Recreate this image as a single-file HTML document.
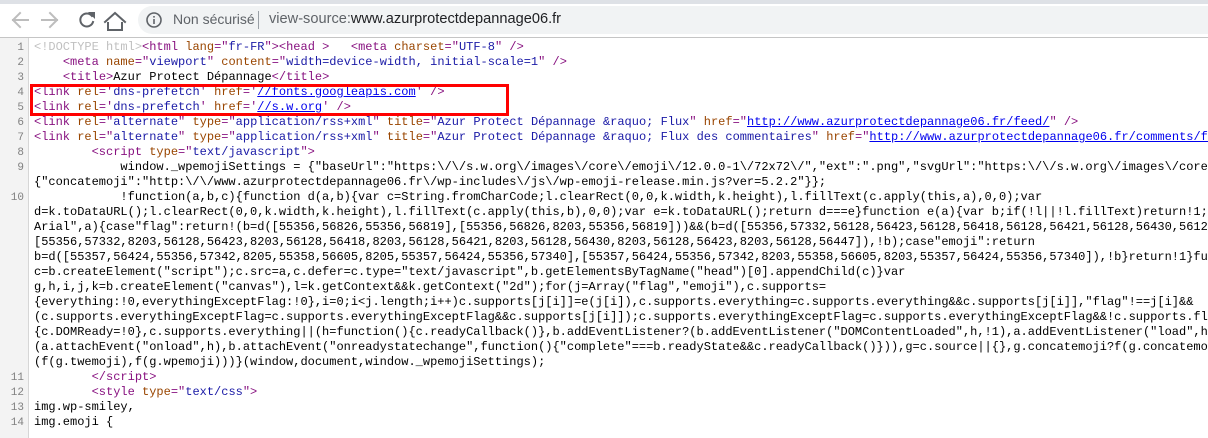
<!DOCTYPE html>
<html><head><meta charset="utf-8"><style>
*{margin:0;padding:0;box-sizing:border-box}
body{width:1208px;height:429px;overflow:hidden;background:#fff;position:relative;font-family:"Liberation Sans",sans-serif}
.top{position:absolute;left:0;top:0;width:1208px;height:4px;background:#dee1e6}
.bar{position:absolute;left:0;top:4px;width:1208px;height:34px;background:#fff;border-bottom:1px solid #c5c5c5}
.pill{position:absolute;left:138px;top:6px;width:1090px;height:28px;border-radius:14px;background:#f1f3f4}
.url{position:absolute;top:11px;font-size:14.6px;color:#5f6368;white-space:nowrap}
.gut{position:absolute;left:0;top:38px;width:29px;height:400px;background:#f3f3f3;border-right:1px solid #d6d6d6}
.code{position:absolute;left:0;top:40px;font-family:"Liberation Mono",monospace;font-size:12px;line-height:15px;white-space:pre;color:#000}
.r{display:block;height:15px}
.n{display:inline-block;width:24px;text-align:right;color:#808080;font-size:11px;margin-right:10px}
.t{color:#881280}.a{color:#994500}.v{color:#1a1aa6}.d{color:#c0c0c0}
.l{text-decoration:underline;color:#0000ee}
.box{position:absolute;left:30px;top:84px;width:479px;height:32px;border:3px solid #f00}
</style></head><body>
<div class="top"></div>
<div class="bar"></div>
<svg style="position:absolute;left:0;top:4px" width="135" height="34" viewBox="0 0 135 34">
<g fill="none" stroke-width="2" stroke-linecap="square">
<path d="M28 16H13M20 9l-7 7 7 7" stroke="#bdbdbd"/>
<path d="M42 16h15M50 9l7 7-7 7" stroke="#bdbdbd"/>
<path d="M92 12a6.5 6.5 0 1 0 1 6" stroke="#5f6368"/>
<path d="M108 19v7h14v-7M105 18l10-9 10 9" stroke="#5f6368"/>
</g>
<path d="M88 8l7 0 0 7z" fill="#5f6368"/>
</svg>
<div class="pill"></div>
<svg style="position:absolute;left:146px;top:12px" width="16" height="16" viewBox="0 0 16 16"><circle cx="8" cy="8" r="7" fill="none" stroke="#5f6368" stroke-width="1.6"/><rect x="7.2" y="7" width="1.6" height="5" fill="#5f6368"/><rect x="7.2" y="4" width="1.6" height="1.6" fill="#5f6368"/></svg>
<div class="url" style="left:173px;font-size:14px">Non sécurisé</div>
<div style="position:absolute;left:258px;top:11px;width:1px;height:18px;background:#9aa0a6"></div>
<div class="url" style="left:269px">view-source:<span style="color:#202124">www.azurprotectdepannage06.fr</span></div>
<div class="gut"></div>
<div class="code"><span class="r"><span class="n">1</span><span class="d">&lt;!DOCTYPE html&gt;</span><span class="t">&lt;html <span class="a">lang</span>="<span class="v">fr-FR</span>"&gt;&lt;head &gt;</span>   <span class="t">&lt;meta <span class="a">charset</span>="<span class="v">UTF-8</span>" /&gt;</span></span><span class="r"><span class="n">2</span>    <span class="t">&lt;meta <span class="a">name</span>="<span class="v">viewport</span>" <span class="a">content</span>="<span class="v">width=device-width, initial-scale=1</span>" /&gt;</span></span><span class="r"><span class="n">3</span>    <span class="t">&lt;title&gt;</span>Azur Protect Dépannage<span class="t">&lt;/title&gt;</span></span><span class="r"><span class="n">4</span><span class="t">&lt;link <span class="a">rel</span>='<span class="v">dns-prefetch</span>' <span class="a">href</span>='<span class="l">//fonts.googleapis.com</span>' /&gt;</span></span><span class="r"><span class="n">5</span><span class="t">&lt;link <span class="a">rel</span>='<span class="v">dns-prefetch</span>' <span class="a">href</span>='<span class="l">//s.w.org</span>' /&gt;</span></span><span class="r"><span class="n">6</span><span class="t">&lt;link <span class="a">rel</span>="<span class="v">alternate</span>" <span class="a">type</span>="<span class="v">application/rss+xml</span>" <span class="a">title</span>="<span class="v">Azur Protect Dépannage &amp;raquo; Flux</span>" <span class="a">href</span>="<span class="l">http://www.azurprotectdepannage06.fr/feed/</span>" /&gt;</span></span><span class="r"><span class="n">7</span><span class="t">&lt;link <span class="a">rel</span>="<span class="v">alternate</span>" <span class="a">type</span>="<span class="v">application/rss+xml</span>" <span class="a">title</span>="<span class="v">Azur Protect Dépannage &amp;raquo; Flux des commentaires</span>" <span class="a">href</span>="<span class="l">http://www.azurprotectdepannage06.fr/comments/feed/</span>" /&gt;</span></span><span class="r"><span class="n">8</span>        <span class="t">&lt;script <span class="a">type</span>="<span class="v">text/javascript</span>"&gt;</span></span><span class="r"><span class="n">9</span>            window._wpemojiSettings = {"baseUrl":"https:\/\/s.w.org\/images\/core\/emoji\/12.0.0-1\/72x72\/","ext":".png","svgUrl":"https:\/\/s.w.org\/images\/core\/emoji</span><span class="r"><span class="n"></span>{"concatemoji":"http:\/\/www.azurprotectdepannage06.fr\/wp-includes\/js\/wp-emoji-release.min.js?ver=5.2.2"}};</span><span class="r"><span class="n">10</span>            !function(a,b,c){function d(a,b){var c=String.fromCharCode;l.clearRect(0,0,k.width,k.height),l.fillText(c.apply(this,a),0,0);var</span><span class="r"><span class="n"></span>d=k.toDataURL();l.clearRect(0,0,k.width,k.height),l.fillText(c.apply(this,b),0,0);var e=k.toDataURL();return d===e}function e(a){var b;if(!l||!l.fillText)return!1;switch</span><span class="r"><span class="n"></span>Arial",a){case"flag":return!(b=d([55356,56826,55356,56819],[55356,56826,8203,55356,56819]))&amp;&amp;(b=d([55356,57332,56128,56423,56128,56418,56128,56421,56128,56430,56128,56423</span><span class="r"><span class="n"></span>[55356,57332,8203,56128,56423,8203,56128,56418,8203,56128,56421,8203,56128,56430,8203,56128,56423,8203,56128,56447]),!b);case"emoji":return</span><span class="r"><span class="n"></span>b=d([55357,56424,55356,57342,8205,55358,56605,8205,55357,56424,55356,57340],[55357,56424,55356,57342,8203,55358,56605,8203,55357,56424,55356,57340]),!b}return!1}function</span><span class="r"><span class="n"></span>c=b.createElement("script");c.src=a,c.defer=c.type="text/javascript",b.getElementsByTagName("head")[0].appendChild(c)}var</span><span class="r"><span class="n"></span>g,h,i,j,k=b.createElement("canvas"),l=k.getContext&amp;&amp;k.getContext("2d");for(j=Array("flag","emoji"),c.supports=</span><span class="r"><span class="n"></span>{everything:!0,everythingExceptFlag:!0},i=0;i&lt;j.length;i++)c.supports[j[i]]=e(j[i]),c.supports.everything=c.supports.everything&amp;&amp;c.supports[j[i]],"flag"!==j[i]&amp;&amp;</span><span class="r"><span class="n"></span>(c.supports.everythingExceptFlag=c.supports.everythingExceptFlag&amp;&amp;c.supports[j[i]]);c.supports.everythingExceptFlag=c.supports.everythingExceptFlag&amp;&amp;!c.supports.flag,c</span><span class="r"><span class="n"></span>{c.DOMReady=!0},c.supports.everything||(h=function(){c.readyCallback()},b.addEventListener?(b.addEventListener("DOMContentLoaded",h,!1),a.addEventListener("load",h,!1)):</span><span class="r"><span class="n"></span>(a.attachEvent("onload",h),b.attachEvent("onreadystatechange",function(){"complete"===b.readyState&amp;&amp;c.readyCallback()})),g=c.source||{},g.concatemoji?f(g.concatemoji):</span><span class="r"><span class="n"></span>(f(g.twemoji),f(g.wpemoji)))}(window,document,window._wpemojiSettings);</span><span class="r"><span class="n">11</span>        <span class="t">&lt;/script&gt;</span></span><span class="r"><span class="n">12</span>        <span class="t">&lt;style <span class="a">type</span>="<span class="v">text/css</span>"&gt;</span></span><span class="r"><span class="n">13</span>img.wp-smiley,</span><span class="r"><span class="n">14</span>img.emoji {</span></div>
<div class="box"></div>
</body></html>
